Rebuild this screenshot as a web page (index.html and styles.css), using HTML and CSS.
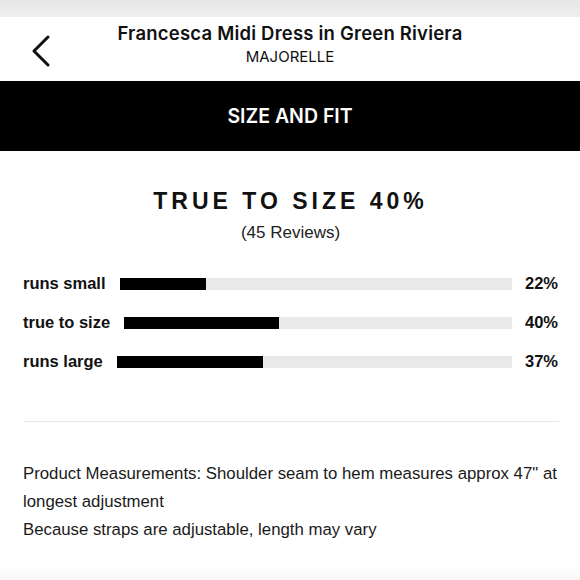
FILE: index.html
```html
<!DOCTYPE html>
<html lang="en">
<head>
    <meta charset="UTF-8">
    <meta name="viewport" content="width=device-width, initial-scale=1.0">
    <title>Size and Fit</title>
    <link rel="stylesheet" href="styles.css">
</head>
<body>
    <div class="status-strip"></div>
    <header class="header">
        <button class="back" aria-label="Back">
            <svg width="20" height="32" viewBox="0 0 20 32" xmlns="http://www.w3.org/2000/svg">
                <polyline points="17,2 3,16 17,30" fill="none" stroke="#111" stroke-width="3" stroke-linecap="round" stroke-linejoin="round"></polyline>
            </svg>
        </button>
        <div class="product">
            <div class="product-name">Francesca Midi Dress in Green Riviera</div>
            <div class="brand">MAJORELLE</div>
        </div>
        <div></div>
    </header>

    <div class="section-bar">SIZE AND FIT</div>

    <main class="fit">
        <h2 class="fit-title">TRUE TO SIZE 40%</h2>
        <div class="fit-count">(45 Reviews)</div>

        <div class="fit-rows">
            <div class="fit-row">
                <span class="fit-label">runs small</span>
                <div class="track"><div class="fill" style="width: 22%"></div></div>
                <span class="fit-pct">22%</span>
            </div>
            <div class="fit-row">
                <span class="fit-label">true to size</span>
                <div class="track"><div class="fill" style="width: 40%"></div></div>
                <span class="fit-pct">40%</span>
            </div>
            <div class="fit-row">
                <span class="fit-label">runs large</span>
                <div class="track"><div class="fill" style="width: 37%"></div></div>
                <span class="fit-pct">37%</span>
            </div>
        </div>

        <hr class="divider">

        <p class="notes">
            Product Measurements: Shoulder seam to hem measures approx 47" at longest adjustment<br>
            Because straps are adjustable, length may vary
        </p>
    </main>
    <div class="bottom-fade"></div>
</body>
</html>
```

FILE: styles.css
```css
body {
    margin: 0;
    font-family: "Liberation Sans", Arial, sans-serif;
    color: #111;
    background: #fff;
    overflow: hidden;
}

.status-strip { height: 17px; background: linear-gradient(to bottom, #e6e6e6, #efefef); }

.header {
    height: 64px;
    display: grid;
    grid-template-columns: 1fr auto 1fr;
    align-items: center;
    background: #fff;
}
.back { justify-self: start; margin-left: 31px; margin-top: 4px; padding: 0; border: 0; background: none; display: flex; }
.product { text-align: center; font-family: Inter, "Noto Sans", sans-serif; }
.product-name { font-size: 18.5px; font-weight: 600; letter-spacing: 0.2px; color: #111; line-height: 22px; margin-top: -9px; }
.brand { font-size: 15px; font-weight: 400; color: #111; line-height: 20px; margin-top: 3px; }

.section-bar {
    height: 70px;
    background: #000;
    color: #fff;
    display: flex;
    align-items: center;
    justify-content: center;
    font-family: Inter, "Noto Sans", sans-serif;
    font-size: 19.5px;
    font-weight: 600;
    padding-bottom: 1px;
    box-sizing: border-box;
}

.fit { padding: 36px 22px 0 23px; }
.fit-title { margin: 0; text-align: center; font-size: 23px; line-height: 28px; letter-spacing: 4px; font-weight: bold; color: #111; }
.fit-count { margin-top: 7px; text-align: center; font-size: 17px; line-height: 22px; color: #222; }

.fit-rows { margin-top: 20px; }
.fit-row { height: 39px; display: flex; align-items: center; }
.fit-label { font-size: 16.5px; font-weight: bold; color: #111; }
.track { flex: 1; height: 12px; margin-left: 14px; background: #e9e9e9; }
.fill { height: 100%; background: #000; }
.fit-pct { width: 33px; margin-left: 13px; text-align: right; font-size: 16.5px; font-weight: bold; color: #111; }

.divider { margin: 40px -1px 0 0; border: 0; border-top: 1px solid #e8e8e8; }

.notes { margin: 38px -14px 0 0; font-size: 16.8px; line-height: 28px; color: #1a1a1a; }

.bottom-fade {
    position: fixed;
    left: 0;
    right: 0;
    bottom: 0;
    height: 16px;
    background: linear-gradient(to bottom, #fff, #f8f8f8);
}
```
